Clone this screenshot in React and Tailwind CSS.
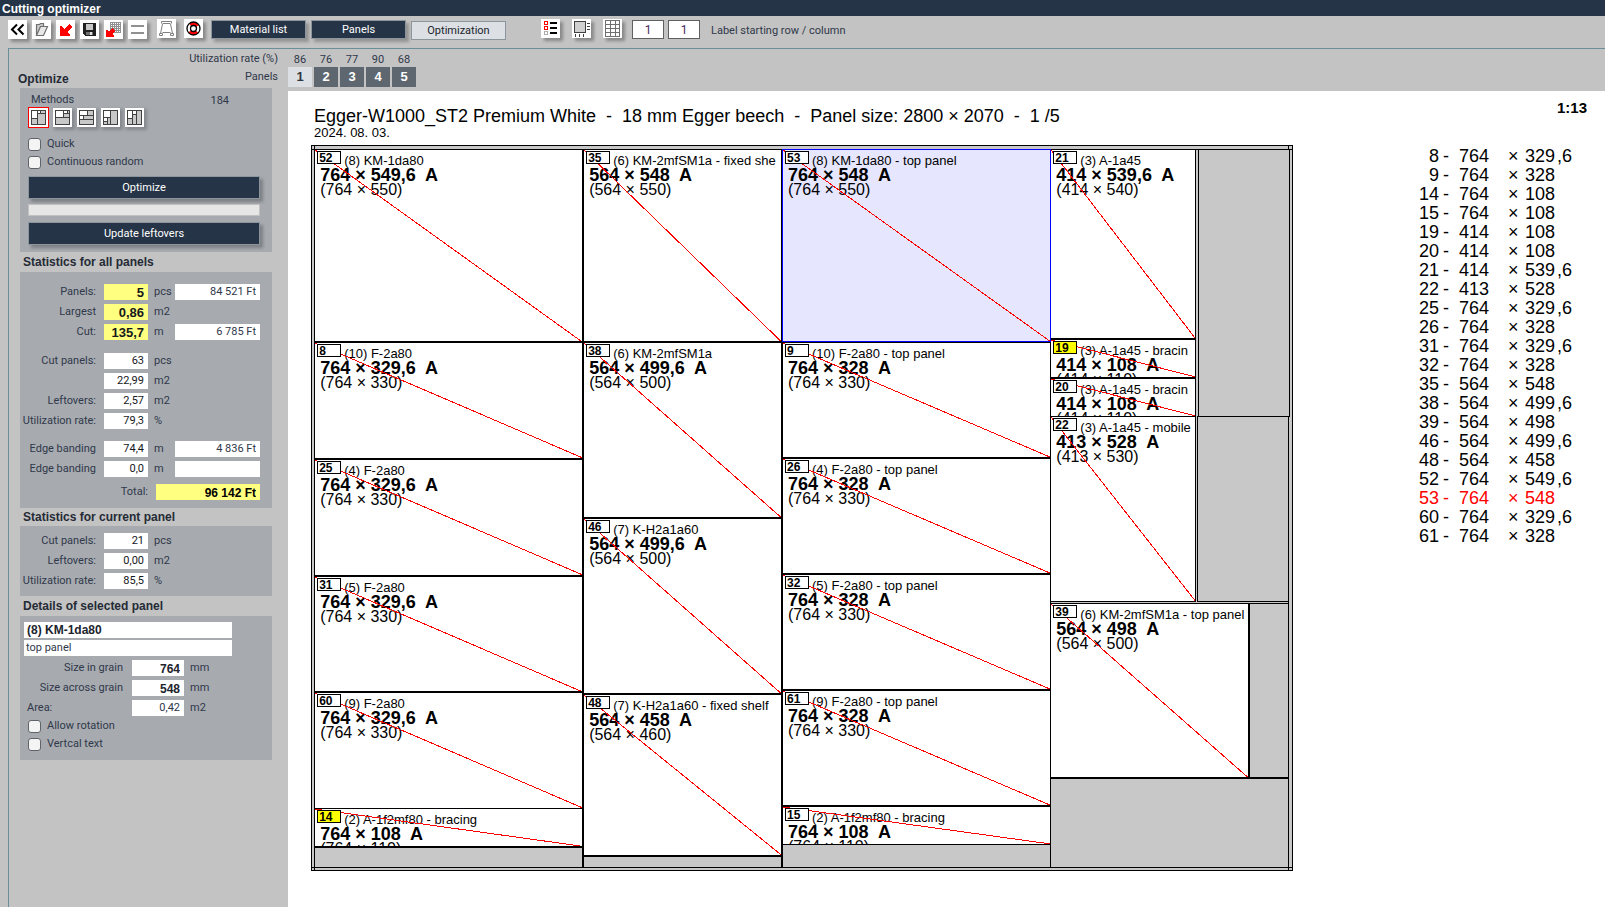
import React, { useState } from "react";
import clsx from "clsx";

const BOARD = { width: 2800, height: 2070 };

// sizes and positions in mm, measured from the top left corner of the board
const PIECES = [
  { id: 52, name: "(8) KM-1da80", x: 9, y: 10, w: 764, h: 549.6, cut: "764 × 549,6", full: "764 × 550" },
  { id: 8, name: "(10) F-2a80", x: 9, y: 562.6, w: 764, h: 329.6, cut: "764 × 329,6", full: "764 × 330" },
  { id: 25, name: "(4) F-2a80", x: 9, y: 895.2, w: 764, h: 329.6, cut: "764 × 329,6", full: "764 × 330" },
  { id: 31, name: "(5) F-2a80", x: 9, y: 1227.8, w: 764, h: 329.6, cut: "764 × 329,6", full: "764 × 330" },
  { id: 60, name: "(9) F-2a80", x: 9, y: 1560.4, w: 764, h: 329.6, cut: "764 × 329,6", full: "764 × 330" },
  { id: 14, name: "(2) A-1f2mf80 - bracing", x: 9, y: 1891, w: 764, h: 109, cut: "764 × 108", full: "764 × 110", marked: true },
  { id: 35, name: "(6) KM-2mfSM1a - fixed she", x: 776, y: 10, w: 564, h: 548, cut: "564 × 548", full: "564 × 550" },
  { id: 38, name: "(6) KM-2mfSM1a", x: 776, y: 561, w: 564, h: 499.6, cut: "564 × 499,6", full: "564 × 500" },
  { id: 46, name: "(7) K-H2a1a60", x: 776, y: 1063.6, w: 564, h: 499.6, cut: "564 × 499,6", full: "564 × 500" },
  { id: 48, name: "(7) K-H2a1a60 - fixed shelf", x: 776, y: 1566.2, w: 564, h: 458, cut: "564 × 458", full: "564 × 460" },
  { id: 53, name: "(8) KM-1da80 - top panel", x: 1343, y: 10, w: 764, h: 548, cut: "764 × 548", full: "764 × 550" },
  { id: 9, name: "(10) F-2a80 - top panel", x: 1343, y: 561, w: 764, h: 328, cut: "764 × 328", full: "764 × 330" },
  { id: 26, name: "(4) F-2a80 - top panel", x: 1343, y: 892, w: 764, h: 328, cut: "764 × 328", full: "764 × 330" },
  { id: 32, name: "(5) F-2a80 - top panel", x: 1343, y: 1223, w: 764, h: 328, cut: "764 × 328", full: "764 × 330" },
  { id: 61, name: "(9) F-2a80 - top panel", x: 1343, y: 1554, w: 764, h: 328, cut: "764 × 328", full: "764 × 330" },
  { id: 15, name: "(2) A-1f2mf80 - bracing", x: 1343, y: 1885, w: 764, h: 108, cut: "764 × 108", full: "764 × 110" },
  { id: 21, name: "(3) A-1a45", x: 2108, y: 10, w: 414, h: 539.6, cut: "414 × 539,6", full: "414 × 540" },
  { id: 19, name: "(3) A-1a45 - bracin", x: 2108, y: 552.6, w: 414, h: 108, cut: "414 × 108", full: "414 × 110", marked: true },
  { id: 20, name: "(3) A-1a45 - bracin", x: 2108, y: 663.6, w: 414, h: 108, cut: "414 × 108", full: "414 × 110" },
  { id: 22, name: "(3) A-1a45 - mobile", x: 2108, y: 774, w: 414, h: 527, cut: "413 × 528", full: "413 × 530" },
  { id: 39, name: "(6) KM-2mfSM1a - top panel", x: 2108, y: 1306, w: 564, h: 497, cut: "564 × 498", full: "564 × 500" },
];

const LEFTOVERS = [
  { x: 9, y: 2002, w: 764, h: 58 },
  { x: 776, y: 2027, w: 564, h: 32 },
  { x: 1343, y: 1993, w: 764, h: 66 },
  { x: 2528, y: 10, w: 262, h: 763 },
  { x: 2525, y: 774, w: 262, h: 527 },
  { x: 2675, y: 1306, w: 112, h: 497 },
  { x: 2108, y: 1806, w: 679, h: 254 },
];

const CUT_LIST = [
  [8, 764, "329,6"], [9, 764, "328"], [14, 764, "108"], [15, 764, "108"], [19, 414, "108"],
  [20, 414, "108"], [21, 414, "539,6"], [22, 413, "528"], [25, 764, "329,6"], [26, 764, "328"],
  [31, 764, "329,6"], [32, 764, "328"], [35, 564, "548"], [38, 564, "499,6"], [39, 564, "498"],
  [46, 564, "499,6"], [48, 564, "458"], [52, 764, "549,6"], [53, 764, "548"], [60, 764, "329,6"],
  [61, 764, "328"],
];

const SHEETS = [[1, 86], [2, 76], [3, 77], [4, 90], [5, 68]];

const place = ({ x, y, w, h }) => ({
  left: `${(x / BOARD.width) * 100}%`,
  top: `${(y / BOARD.height) * 100}%`,
  width: `calc(${(w / BOARD.width) * 100}% + 1px)`,
  height: `calc(${(h / BOARD.height) * 100}% + 1px)`,
});

function Svg({ size = 19, children }) {
  return (
    <svg width={size} height={size} viewBox={`0 0 ${size} ${size}`} fill="none" shapeRendering="crispEdges" aria-hidden="true">
      {children}
    </svg>
  );
}

function IconButton({ label, className, children }) {
  return (
    <button type="button" aria-label={label} className={clsx("size-[19px] shrink-0 bg-white shadow-[3px_3px_3px_rgba(0,0,0,0.3)]", className)}>
      {children}
    </button>
  );
}

function Toolbar() {
  return (
    <div className="flex h-8 items-start pt-1 pl-2">
      <div className="flex gap-[5px]">
        <IconButton label="Back">
          <Svg>
            <g stroke="#000" strokeWidth="2" shapeRendering="auto">
              <path d="M9 4.500L4 9.500L9 14.500M15.500 4.500L10.500 9.500L15.500 14.500" />
            </g>
          </Svg>
        </IconButton>
        <IconButton label="Open">
          <Svg>
            <g stroke="#707070" strokeWidth="1.200" shapeRendering="auto">
              <path d="M4.500 15.500V4.500H7.500L8.500 3.500H11.500V6" fill="#c8c8c8" />
              <path d="M4.500 15.500L8.500 6.500H15.500L11.500 15.500Z" fill="#e8e8e8" />
            </g>
          </Svg>
        </IconButton>
        <IconButton label="Import">
          <Svg>
            <path d="M4 6H5L8 9L13 4L16 7L11 12L14 15V16H4Z" fill="#ff0000" />
          </Svg>
        </IconButton>
        <IconButton label="Save">
          <Svg>
            <path d="M3 3H16V16H5L3 14Z" fill="#202020" />
            <rect x="6" y="4" width="7" height="6" fill="#c8c8c8" />
            <rect x="6" y="12" width="7" height="3" fill="#707070" />
            <rect x="10" y="12" width="2" height="3" fill="#e0e0e0" />
          </Svg>
        </IconButton>
        <IconButton label="Import table">
          <Svg>
            <path d="M6.500 2.500H16.500V12.500H6.500ZM8.500 2V13M10.500 2V13M12.500 2V13M14.500 2V13M6 4.500H17M6 6.500H17M6 8.500H17M6 10.500H17" stroke="#909090" />
            <path d="M2 10H3L5 12L8 8L11 11L8 14L10 16V17H2Z" fill="#ff0000" />
          </Svg>
        </IconButton>
        <IconButton label="Equalize">
          <Svg>
            <path d="M3 5h13v2H3zM3 12h13v2H3z" fill="#909090" />
          </Svg>
        </IconButton>
      </div>
      <IconButton label="Print" className="ml-[10px] -mt-px">
        <Svg>
          <g stroke="#808080" shapeRendering="auto">
            <path d="M4.500 4.500V2.500H14.500V4.500M5.500 4.500H13.500M5.500 5L3.500 14.500M13.500 5L15.500 14.500M2.500 14.500H5.500V16.500H2.500ZM13.500 14.500H16.500V16.500H13.500ZM5.500 13.500H13.500" />
          </g>
        </Svg>
      </IconButton>
      <IconButton label="Help" className="ml-2 -mt-px">
        <svg width="19" height="19" viewBox="0 0 19 19" fill="none" aria-hidden="true">
          <circle cx="9.500" cy="9.500" r="4.700" stroke="#ff0000" strokeWidth="3.600" strokeDasharray="8 6.760" strokeDashoffset="-3.380" />
          <circle cx="9.500" cy="9.500" r="6.500" stroke="#000" strokeWidth="1.300" />
          <circle cx="9.500" cy="9.500" r="3" stroke="#000" strokeWidth="1.300" />
        </svg>
      </IconButton>
      <div className="ml-2 flex gap-[5px]">
        <button type="button" className="h-[19px] w-[95px] border border-[#8d959c] bg-[#253446] pt-px text-white shadow-[3px_3px_3px_rgba(0,0,0,0.25)]">Material list</button>
        <button type="button" className="h-[19px] w-[95px] border border-[#8d959c] bg-[#253446] pt-px text-white shadow-[3px_3px_3px_rgba(0,0,0,0.25)]">Panels</button>
        <button type="button" className="mt-px h-[19px] w-[95px] border border-[#8d959c] bg-[#dce0e4] pt-px text-[#20242c]">Optimization</button>
      </div>
      <div className="-mt-px ml-[35px] flex gap-3">
        <IconButton label="List view">
          <Svg>
            <path d="M3.500 2.500H6.500V5.500H3.500ZM3.500 7.500H6.500V10.500H3.500Z" stroke="#ff0000" />
            <path d="M3.500 12.500H6.500V15.500H3.500Z" stroke="#b0b0b0" />
            <path d="M9 3h7v2H9zM9 8h7v2H9zM9 13h7v2H9z" fill="#000" />
          </Svg>
        </IconButton>
        <IconButton label="Drawing view">
          <Svg>
            <rect x="2.500" y="2.500" width="11" height="11" fill="#d0d0d0" stroke="#404040" />
            <path d="M15 4.500H18M15 7.500H18M15 10.500H18M3.500 15V18M7.500 15V18M11.500 15V18" stroke="#404040" />
          </Svg>
        </IconButton>
        <IconButton label="Label sheet">
          <Svg>
            <path d="M2.500 1.500H16.500V17.500H2.500ZM7.500 1V18M12.500 1V18M2 5.500H17M2 9.500H17M2 13.500H17" stroke="#707070" />
          </Svg>
        </IconButton>
      </div>
      <div className="ml-[10px] flex gap-1">
        <input aria-label="Label starting row" defaultValue="1" className="h-[19px] w-8 border border-[#606060] bg-white text-center text-[12px] text-[#4a2a58]" />
        <input aria-label="Label starting column" defaultValue="1" className="h-[19px] w-8 border border-[#606060] bg-white text-center text-[12px] text-[#4a2a58]" />
      </div>
      <span className="ml-[11px] leading-[21px]">Label starting row / column</span>
    </div>
  );
}

function Field({ label, value, unit, price, strong }) {
  const id = label.toLowerCase().replace(/\W+/g, "-") + value.replace(/\W/g, "");
  return (
    <div className="flex h-5 items-center">
      <label htmlFor={id} className="w-[76px] pt-px text-right whitespace-nowrap">{label}</label>
      <input
        id={id}
        readOnly
        aria-label={label ? undefined : "Cut area"}
        defaultValue={value}
        className={clsx("ml-2 h-4 w-11 pt-px pr-1 text-right text-[#15181c]", strong ? "bg-[#ffff80] text-[13px] font-bold font-['Liberation_Sans',sans-serif]" : "bg-white")}
      />
      <span className="ml-1.5 w-[21px]">{unit}</span>
      {price !== undefined && (
        <input readOnly aria-label={`${label} price`} defaultValue={price} className="h-4 w-[85px] bg-white pt-px pr-1 text-right" />
      )}
    </div>
  );
}

function Check({ label }) {
  return (
    <label className="flex h-[18px] items-center gap-1.5">
      <input type="checkbox" className="size-[13px] appearance-none rounded-[3px] border border-[#606468] bg-[#f4f4f4] checked:bg-[#253446]" />
      {label}
    </label>
  );
}

function Heading({ children, className }) {
  return <h2 className={clsx("font-['Liberation_Sans',sans-serif] text-[12px] font-bold text-[#252b36]", className)}>{children}</h2>;
}

const METHODS = [
  { label: "Method 1", white: "M0 0h6v8H0zM6 0h3v3H6z", lines: "M6.500 0V15M9.500 0V3M6 3.500H15M0 8.500H7" },
  { label: "Method 2", white: "M0 0h8v7H0zM8 0h4v3H8z", lines: "M8.500 0V7M12.500 0V4M8 3.500H15M0 7.500H15" },
  { label: "Method 3", white: "M0 0h8v5H0zM0 5h4v4H0z", lines: "M8.500 0V5M0 5.500H15M4.500 5V9M0 9.500H15" },
  { label: "Method 4", white: "M0 0h7v7H0zM0 7h4v4H0z", lines: "M7.500 0V15M0 7.500H7M4.500 7V15M0 11.500H4" },
  { label: "Method 5", white: "M0 0h5v8H0zM5 0h4v4H5z", lines: "M5.500 0V15M9.500 0V15M0 8.500H5M5 4.500H9" },
];

function Methods() {
  const [active, setActive] = useState(0);
  return (
    <div className="flex h-[21px] gap-[3px]">
      {METHODS.map((m, i) => (
        <button
          key={m.label}
          type="button"
          aria-label={m.label}
          onClick={() => setActive(i)}
          className={clsx(
            "flex size-[21px] items-center justify-center border bg-white bg-clip-padding",
            i === active ? "border-[#ff0000]" : "border-transparent shadow-[2px_2px_3px_rgba(0,0,0,0.2)]"
          )}
        >
          <Svg size={15}>
            <rect width="15" height="15" fill="#c8c8c8" />
            <path d={m.white} fill="#fff" />
            <path d={m.lines} stroke="#404040" />
            <rect x="0.500" y="0.500" width="14" height="14" stroke="#404040" />
          </Svg>
        </button>
      ))}
    </div>
  );
}

function Sidebar() {
  return (
    <aside className="w-[280px] shrink-0 border-l border-[#6b8f98] pr-4 pl-[11px]">
      <div className="-ml-0.5 h-[39px] pt-5">
        <Heading className="leading-5">Optimize</Heading>
      </div>
      <section className="h-[164px] bg-[#a7abb0] pt-1 pr-3 pl-2">
        <div className="flex h-[15px] justify-between pr-[31px] pl-[3px] leading-4">
          <span>Methods</span>
          <span className="leading-[18px]">184</span>
        </div>
        <Methods />
        <div className="pt-[7px]">
          <Check label="Quick" />
          <Check label="Continuous random" />
        </div>
        <button type="button" className="mt-[5px] block h-[23px] w-full border border-[#8d959c] bg-[#253446] pt-px text-white shadow-[3px_3px_3px_rgba(0,0,0,0.25)]">Optimize</button>
        <div role="progressbar" aria-label="Progress" className="mt-[5px] h-3 border border-[#c0c0c0] bg-[#e6e6e6]" />
        <button type="button" className="mt-[6px] block h-[23px] w-full border border-[#8d959c] bg-[#253446] pt-px text-white shadow-[3px_3px_3px_rgba(0,0,0,0.25)]">Update leftovers</button>
      </section>

      <Heading className="pl-[3px] leading-5">Statistics for all panels</Heading>
      <section className="bg-[#a7abb0] pt-[10px] pb-[6px]">
        <Field label="Panels:" value="5" unit="pcs" price="84 521 Ft" strong />
        <Field label="Largest" value="0,86" unit="m2" strong />
        <Field label="Cut:" value="135,7" unit="m" price="6 785 Ft" strong />
        <div className="pt-[9px] pb-2">
          <Field label="Cut panels:" value="63" unit="pcs" />
          <Field label="" value="22,99" unit="m2" />
          <Field label="Leftovers:" value="2,57" unit="m2" />
          <Field label="Utilization rate:" value="79,3" unit="%" />
        </div>
        <Field label="Edge banding" value="74,4" unit="m" price="4 836 Ft" />
        <Field label="Edge banding" value="0,0" unit="m" price="" />
        <div className="mt-[3px] flex h-5 items-center">
          <label htmlFor="total" className="w-32 pt-px text-right">Total:</label>
          <input id="total" readOnly defaultValue="96 142 Ft" className="ml-2 h-4 w-[104px] bg-[#ffff80] pt-px pr-1 text-right font-['Liberation_Sans',sans-serif] text-[12px] font-bold text-black" />
        </div>
      </section>

      <Heading className="pl-[3px] leading-[18px]">Statistics for current panel</Heading>
      <section className="bg-[#a7abb0] py-[5px]">
        <Field label="Cut panels:" value="21" unit="pcs" />
        <Field label="Leftovers:" value="0,00" unit="m2" />
        <Field label="Utilization rate:" value="85,5" unit="%" />
      </section>

      <Heading className="pl-[3px] leading-5">Details of selected panel</Heading>
      <section className="bg-[#a7abb0] px-1 pt-[6px] pb-[7px]">
        <input aria-label="Panel name" defaultValue="(8) KM-1da80" className="block h-4 w-[208px] bg-white pb-px pl-[3px] font-['Liberation_Sans',sans-serif] text-[12px] font-bold text-[#20242c]" />
        <input aria-label="Panel part" defaultValue="top panel" className="mt-0.5 mb-0.5 block h-4 w-[208px] bg-white pl-0.5" />
        <div className="flex h-5 items-center">
          <label htmlFor="size-in" className="w-[99px] pt-px text-right">Size in grain</label>
          <input id="size-in" defaultValue="764" className="mr-1.5 ml-[9px] h-4 w-[52px] bg-white pt-px pr-1 text-right font-['Liberation_Sans',sans-serif] text-[12px] font-bold text-[#20242c]" />
          mm
        </div>
        <div className="flex h-5 items-center">
          <label htmlFor="size-across" className="w-[99px] pt-px text-right">Size across grain</label>
          <input id="size-across" defaultValue="548" className="mr-1.5 ml-[9px] h-4 w-[52px] bg-white pt-px pr-1 text-right font-['Liberation_Sans',sans-serif] text-[12px] font-bold text-[#20242c]" />
          mm
        </div>
        <div className="flex h-5 items-center">
          <label htmlFor="area" className="w-[99px] pl-[3px]">Area:</label>
          <input id="area" readOnly defaultValue="0,42" className="mr-1.5 ml-[9px] h-4 w-[52px] bg-white pt-px pr-1 text-right" />
          m2
        </div>
        <div className="-mt-px pl-1">
          <Check label="Allow rotation" />
          <Check label="Vertcal text" />
        </div>
      </section>
    </aside>
  );
}

function SheetTabs({ active, onSelect }) {
  return (
    <div className="relative flex h-[42px] items-end pb-1">
      <div className="absolute right-full bottom-1 mr-2.5 text-right whitespace-nowrap">
        <p className="h-4 leading-4">Utilization rate (%)</p>
        <p className="h-5 leading-5">Panels</p>
      </div>
      <div className="flex gap-0.5">
        {SHEETS.map(([n, rate]) => (
          <div key={n} className="w-6 text-center">
            <p className="h-4 leading-[18px]">{rate}</p>
            <button
              type="button"
              onClick={() => onSelect(n)}
              className={clsx(
                "block h-5 w-6 font-['Liberation_Sans',sans-serif] text-[13px] font-bold",
                n === active ? "bg-[#dce0e4] text-[#30363e]" : "bg-[#5e6770] text-white"
              )}
            >
              {n}
            </button>
          </div>
        ))}
      </div>
    </div>
  );
}

function Piece({ piece, selected, onSelect }) {
  return (
    <div
      onClick={() => onSelect(piece.id)}
      style={place(piece)}
      className={clsx("absolute overflow-hidden border", selected ? "z-10 border-[#0000ff] bg-[#e6e6ff]" : "border-black bg-white")}
    >
      <div className="flex h-[17px] items-start gap-[3px] pt-px pl-0.5 whitespace-nowrap">
        <span className={clsx("relative z-10 h-[13px] w-6 shrink-0 border border-black pl-px text-[12px] leading-[13px] font-bold", piece.marked ? "bg-[#ffff00]" : "bg-white")}>{piece.id}</span>
        <span className="text-[13px] leading-[19px]">{piece.name}</span>
      </div>
      <p className="pl-[5px] text-[18px] leading-4 font-bold whitespace-pre">{piece.cut}  A</p>
      <p className="pl-[5px] text-[16px] leading-[14px] whitespace-nowrap">({piece.full})</p>
      <svg className="absolute inset-0 size-full" shapeRendering="crispEdges" aria-hidden="true">
        <line x1="0" y1="0" x2="100%" y2="100%" stroke="#ff0000" />
      </svg>
    </div>
  );
}

function Board({ selected, onSelect }) {
  return (
    <div className="relative aspect-[2800/2070] min-w-0 flex-1 bg-[#c8c8c8] outline -outline-offset-1 outline-black">
      {/* trimmed edges run through to the outside of the board */}
      <div style={place({ x: 0, y: 10, w: 2797, h: 2050 })} className="absolute border border-black" />
      <div style={place({ x: 9, y: 0, w: 2778, h: 2067 })} className="absolute border border-black" />
      {LEFTOVERS.map((l, i) => (
        <div key={i} style={place(l)} className="absolute border border-black bg-[#c8c8c8]" />
      ))}
      {PIECES.map((p) => (
        <Piece key={p.id} piece={p} selected={p.id === selected} onSelect={onSelect} />
      ))}
    </div>
  );
}

function CutList({ selected }) {
  return (
    <table className="mt-0.5 ml-[113px] text-[18px]">
      <tbody>
        {CUT_LIST.map(([id, length, width]) => {
          const [whole, decimal] = width.split(",");
          return (
            <tr key={id} className={clsx("h-[19px] leading-[19px]", id === selected && "text-[#ff0000]")}>
              <td className="w-[33px] p-0 text-right">{id}</td>
              <td className="w-5 p-0 pl-1">-</td>
              <td className="w-[49px] p-0">{length}</td>
              <td className="w-[17px] p-0">×</td>
              <td className="p-0">{whole}{decimal && <span className="ml-0.5">,{decimal}</span>}</td>
            </tr>
          );
        })}
      </tbody>
    </table>
  );
}

export default function App() {
  const [sheet, setSheet] = useState(1);
  const [selected, setSelected] = useState(53);

  return (
    <div className="flex min-h-screen flex-col bg-[#c3c3c3] font-['Roboto',sans-serif] text-[11px] text-[#30384a]">
      <header className="h-4 bg-[#253446] pl-0.5 font-['Liberation_Sans',sans-serif] text-[12px] leading-[18px] font-bold text-white">Cutting optimizer</header>
      <Toolbar />
      <div className="ml-2 flex flex-1 border-t border-[#6b8f98]">
        <Sidebar />
        <main className="flex min-w-0 flex-1 flex-col">
          <SheetTabs active={sheet} onSelect={setSheet} />
          <div className="flex-1 bg-white pl-[23px] font-['Liberation_Sans',sans-serif] text-black">
            <div className="flex h-[54px] items-start justify-between pt-[14px] pr-[18px] pl-[3px]">
              <div>
                <h1 className="text-[18px] leading-[22px] whitespace-pre">Egger-W1000_ST2 Premium White  -  18 mm Egger beech  -  Panel size: 2800 × 2070  -  {sheet} /5</h1>
                <p className="text-[13px] leading-[11px]">2024. 08. 03.</p>
              </div>
              <p className="text-[15px] leading-[6px] font-bold">1:13</p>
            </div>
            <div className="flex">
              <Board selected={selected} onSelect={setSelected} />
              <div className="w-[312px] shrink-0">
                <CutList selected={selected} />
              </div>
            </div>
          </div>
        </main>
      </div>
    </div>
  );
}
